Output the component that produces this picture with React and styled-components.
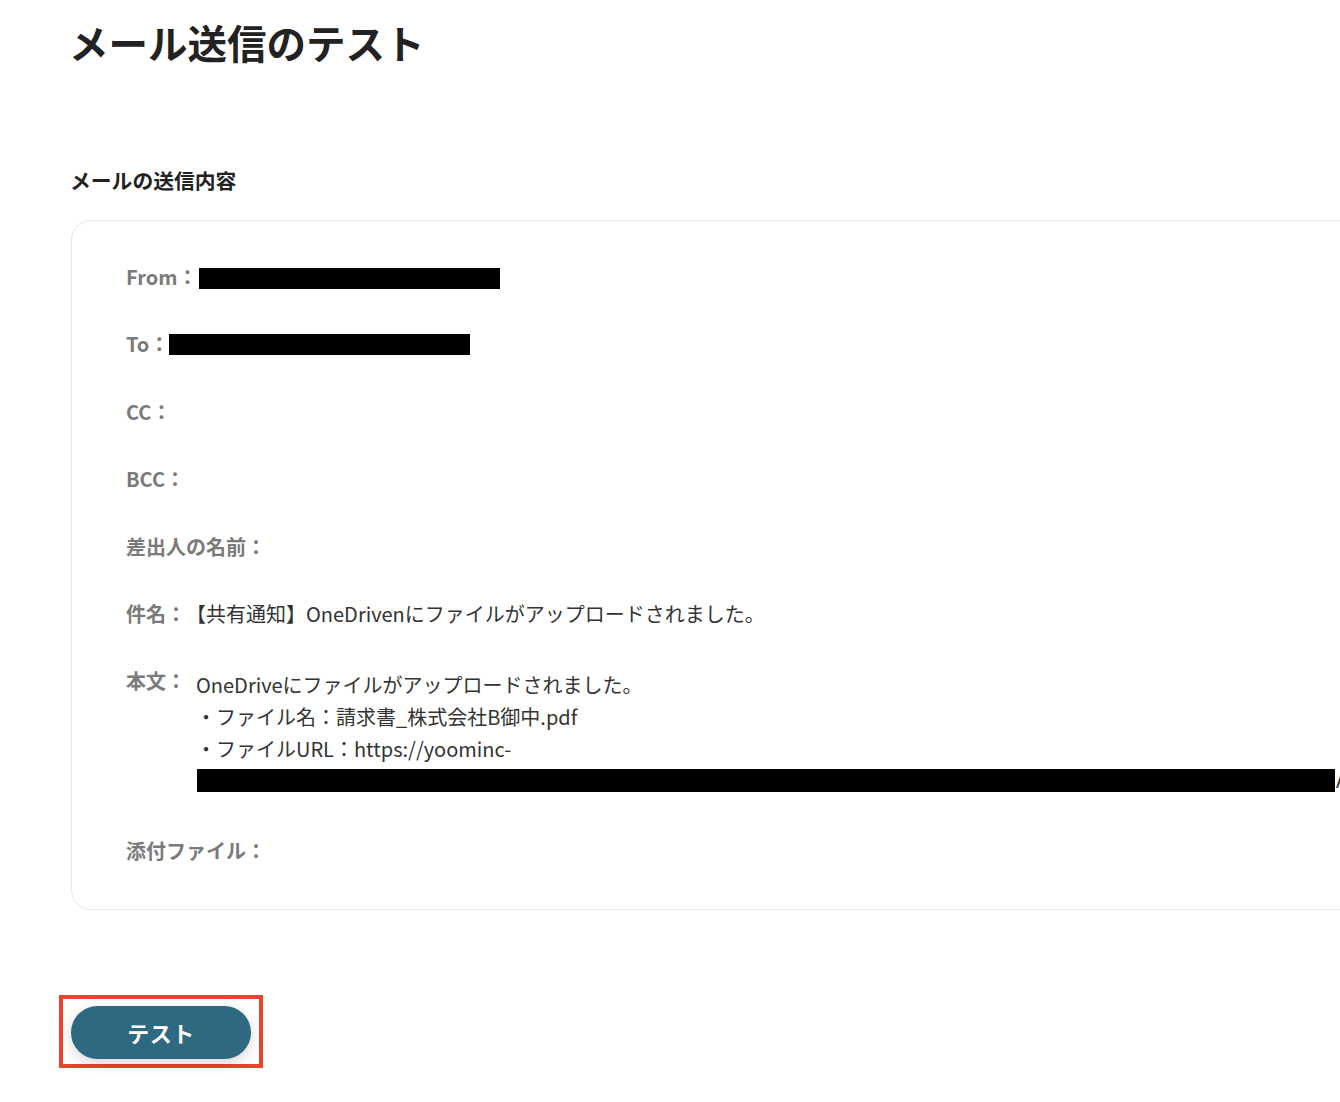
import React from "react";
import styled, { createGlobalStyle } from "styled-components";

const Global = createGlobalStyle`
  html, body {
    margin: 0;
    padding: 0;
    background: #ffffff;
    overflow-x: hidden;
  }
  body {
    font-family: "Noto Sans CJK JP", "Noto Sans", sans-serif;
    color: #333333;
  }
`;

const Page = styled.main`
  padding: 18px 0 40px 71px;
  width: 1400px;
  box-sizing: border-box;
`;

const Title = styled.h1`
  margin: 0 0 0 -2px;
  font-size: 39.5px;
  line-height: 47px;
  font-weight: 700;
  color: #222222;
`;

const SectionTitle = styled.h2`
  margin: 100px 0 25px -1px;
  font-size: 20.8px;
  line-height: 30px;
  font-weight: 700;
  color: #222222;
`;

const Card = styled.section`
  width: 1320px;
  box-sizing: border-box;
  border: 1px solid #e6e6e6;
  border-radius: 20px;
  padding: 44px 54px 46px 54px;
  display: flex;
  flex-direction: column;
  gap: 43.4px;
`;

const Row = styled.div`
  display: flex;
  align-items: flex-start;
`;

const Label = styled.span`
  font-size: 20px;
  line-height: 24px;
  font-weight: 700;
  color: #7a7a7a;
  white-space: nowrap;
`;

const Value = styled.div`
  font-size: 20px;
  line-height: ${(p) => (p.$multi ? "31.7px" : "24px")};
  margin-left: ${(p) => (p.$multi ? "10px" : "0")};
  color: #333333;
  white-space: nowrap;
  display: flex;
  align-items: center;
  ${(p) => p.$multi && "flex-direction: column; align-items: flex-start;"}
`;

const Line = styled.div`
  display: flex;
  align-items: center;
  height: 31.7px;
`;

const Redact = styled.span`
  display: inline-block;
  background: #000000;
  width: ${(p) => p.$w}px;
  height: ${(p) => p.$h}px;
  margin-left: ${(p) => p.$ml || 0}px;
  margin-top: ${(p) => p.$mt || 0}px;
`;

const Tail = styled.span`
  font-size: 20px;
  color: #333333;
  margin-left: 1px;
`;

const ButtonArea = styled.div`
  margin-top: 85px;
  margin-left: -12px;
`;

const Highlight = styled.div`
  display: inline-block;
  border: 4px solid #e8452c;
  padding: 7px 8px 5px 8px;
`;

const Button = styled.button`
  display: flex;
  align-items: center;
  justify-content: center;
  width: 180px;
  height: 53px;
  border: none;
  border-radius: 27px;
  background: #2e6881;
  color: #ffffff;
  font-family: "Noto Sans CJK JP", "Noto Sans", sans-serif;
  font-size: 22px;
  font-weight: 700;
  letter-spacing: 0.5px;
  box-shadow: 0 4px 14px rgba(0, 0, 0, 0.16);
  cursor: pointer;
  padding: 0 0 2px;
`;

export default function App() {
  return (
    <>
      <Global />
      <Page>
        <Title>メール送信のテスト</Title>
        <SectionTitle>メールの送信内容</SectionTitle>
        <Card>
          <Row>
            <Label>From：</Label>
            <Value>
              <Redact $w={301} $h={21} $ml={1} $mt={3} />
            </Value>
          </Row>
          <Row>
            <Label>To：</Label>
            <Value>
              <Redact $w={301} $h={21} $ml={0} $mt={2} />
            </Value>
          </Row>
          <Row>
            <Label>CC：</Label>
          </Row>
          <Row>
            <Label>BCC：</Label>
          </Row>
          <Row>
            <Label>差出人の名前：</Label>
          </Row>
          <Row>
            <Label>件名：</Label>
            <Value>【共有通知】OneDrivenにファイルがアップロードされました。</Value>
          </Row>
          <Row>
            <Label>本文：</Label>
            <Value $multi>
              <Line>OneDriveにファイルがアップロードされました。</Line>
              <Line>・ファイル名：請求書_株式会社B御中.pdf</Line>
              <Line>・ファイルURL：https://yoominc-</Line>
              <Line>
                <Redact $w={1138} $h={23} $ml={1} />
                <Tail>A</Tail>
              </Line>
            </Value>
          </Row>
          <Row>
            <Label>添付ファイル：</Label>
          </Row>
        </Card>
        <ButtonArea>
          <Highlight>
            <Button>テスト</Button>
          </Highlight>
        </ButtonArea>
      </Page>
    </>
  );
}
